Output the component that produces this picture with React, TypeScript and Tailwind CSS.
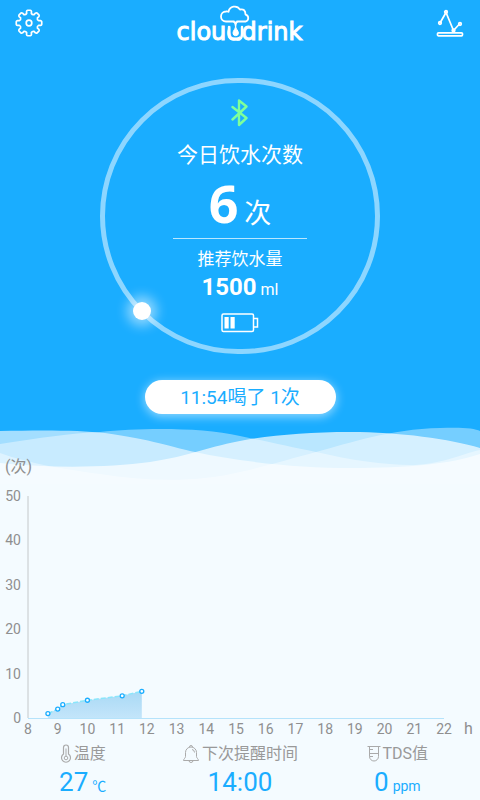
const drinks = [
  { hour: 8.67, count: 1 },
  { hour: 9, count: 2 },
  { hour: 9.17, count: 3 },
  { hour: 10, count: 4 },
  { hour: 11.17, count: 5 },
  { hour: 11.83, count: 6 },
];

const hours = [8, 9, 10, 11, 12, 13, 14, 15, 16, 17, 18, 19, 20, 21, 22];
const counts = [0, 10, 20, 30, 40, 50];

const chart = { left: 28, right: 444, top: 42, bottom: 264 };

const toX = (hour: number) =>
  chart.left + ((hour - 8) / 14) * (chart.right - chart.left);
const toY = (count: number) =>
  chart.bottom - (count / 50) * (chart.bottom - chart.top);

function gearPath() {
  const point = (radius: number, degrees: number) => {
    const a = (degrees * Math.PI) / 180;
    return `${(14 + radius * Math.cos(a)).toFixed(2)} ${(14 + radius * Math.sin(a)).toFixed(2)}`;
  };
  let d = "";
  for (let i = 0; i < 8; i++) {
    const a = i * 45;
    d += `${i === 0 ? "M" : "L"}${point(9.8, a - 14)}`;
    d += `L${point(11.8, a - 12)}Q${point(12.8, a - 10)} ${point(12.8, a - 6)}`;
    d += `L${point(12.8, a + 6)}Q${point(12.8, a + 10)} ${point(11.8, a + 12)}`;
    d += `L${point(9.8, a + 14)}Q${point(8.6, a + 22.5)} ${point(9.8, a + 31)}`;
  }
  return d + "Z";
}

function Logo() {
  return (
    <div className="relative h-10 font-['DejaVu_Sans'] text-[24px] leading-6 text-white">
      <h1 className="pt-5 [-webkit-text-stroke:1px_white]">clouddrink</h1>
      {/* Cloud with a drop falling into the first d */}
      <svg
        className="absolute left-[43px] top-[3px]"
        width="34"
        height="38"
        viewBox="0 0 34 38"
        fill="none"
        stroke="white"
        strokeWidth="1.800"
        strokeLinecap="round"
        strokeLinejoin="round"
      >
        <path d="M10 17h12v9c0 4-1 8.500-6 8.500S10.500 30 10.500 26Z" fill="#1aadff" stroke="none" />
        <path d="M9 24v6.500c0 4 2 6 5 6h4c2.500 0 4-2 4-6V24" strokeWidth="2.400" />
        <path d="M14 18.500H6A4.700 4.700 0 0 1 6 8.500Q7.500 8.300 8.500 8.800A6.300 6.300 0 0 1 20 6.500Q25.500 5.500 25.500 11.500A3.600 3.600 0 0 1 25.500 18.500H17" />
        <path d="M12 18.500h7q-2.500 1-2.700 5h-1.400q-.2-4-2.900-5Z" fill="white" stroke="none" />
        <path d="M15.600 23.500c0 2.500-2.600 4-2.600 6.500a2.700 2.700 0 0 0 5.400 0c0-2.500-2.800-4-2.800-6.500Z" fill="white" strokeWidth="1" />
      </svg>
    </div>
  );
}

function Header() {
  return (
    <header className="flex h-12 items-start justify-between px-4">
      <button type="button" aria-label="设置" className="mt-[9px] -ml-px">
        <svg width="28" height="28" viewBox="0 0 28 28" fill="none" stroke="white" strokeWidth="1.700" strokeLinejoin="round">
          <path d={gearPath()} />
          <circle cx="14" cy="14" r="2.800" />
        </svg>
      </button>
      <Logo />
      <button type="button" aria-label="统计" className="mt-2">
        <svg width="28" height="30" viewBox="0 0 28 30" fill="none" stroke="white" strokeWidth="1.700">
          <path d="M4 15 10 4.500 17.500 22.500 23.500 16" />
          <circle cx="4" cy="15" r="1.300" />
          <circle cx="10" cy="4" r="1.300" />
          <circle cx="17.500" cy="22.500" r="1.300" />
          <circle cx="24" cy="16" r="1.300" />
          <rect x="1.500" y="24.800" width="25" height="3" rx="1" />
        </svg>
      </button>
    </header>
  );
}

function Dial() {
  return (
    <div className="relative mx-auto mt-[30px] flex h-[276px] w-[280px] flex-col items-center rounded-full border-[5px] border-white/50 text-white">
      <svg
        className="mt-4 shrink-0"
        width="18"
        height="28"
        viewBox="0 0 18 28"
        fill="none"
        stroke="#7dff9c"
        strokeWidth="2.400"
        strokeLinecap="round"
        strokeLinejoin="round"
      >
        <path d="M1.500 8 15.500 19 8 26V1.500L15.500 7.500 1.500 20.500" />
      </svg>
      <p className="mt-3 text-[21px] leading-8">今日饮水次数</p>
      <p className="mt-0.5 flex h-[60px] items-baseline gap-1.5 leading-[60px]">
        <span className="font-['Open_Sans'] text-[52px] font-bold">6</span>
        <span className="text-[27px]">次</span>
      </p>
      <hr className="mt-[5px] w-[134px] border-white/70" />
      <p className="mt-2 text-[17px] leading-6">推荐饮水量</p>
      <p className="mt-0.5 flex h-7 items-baseline gap-1 leading-7">
        <span className="text-[24px] font-bold">1500</span>
        <span className="text-[16px]">ml</span>
      </p>
      <svg className="mt-3 shrink-0" width="38" height="20" viewBox="0 0 38 20" fill="none" stroke="white" strokeWidth="1.500">
        <rect x="1" y="1" width="31.500" height="17.500" rx="1.500" />
        <path d="M32.500 5.500h4v8.500h-4" />
        <path d="M3.500 4h4.200v11.500H3.500zM9.500 4h4.200v11.500H9.500z" fill="white" stroke="none" />
      </svg>
      <span className="absolute bottom-[29px] left-7 size-[18px] rounded-full bg-white shadow-[0_0_12px_6px_rgba(255,255,255,0.5)]" />
    </div>
  );
}

function Waves() {
  return (
    <svg className="mt-3 block h-[58px] w-full" viewBox="0 0 480 58" preserveAspectRatio="none" fill="white">
      <path opacity=".6" d="M0 5C40 4 80 4 105 7C150 13 175 22 195 26C240 36 300 42 350 42C410 42 450 38 480 28V58H0Z" />
      <path opacity=".4" d="M0 18C40 12 70 7 100 6C140 2 200 1 240 10C270 16 290 21 316 26C350 34 385 39 410 39C440 39 462 28 480 24V58H0Z" />
      <path opacity=".7" d="M0 37C60 43 110 41 150 36C190 30 210 20 245 14C275 9 310 6 350 6C400 6 450 13 480 22V58H0Z" />
      <path opacity=".4" d="M0 27C30 38 70 44 100 48C150 56 200 56 240 46C270 39 290 33 316 26C350 17 390 3 440 2C460 1 475 2 480 5V58H0Z" />
    </svg>
  );
}

function DrinkChart() {
  const line = drinks.map((p) => `${toX(p.hour)},${toY(p.count)}`).join(" ");
  const first = toX(drinks[0].hour);
  const last = toX(drinks[drinks.length - 1].hour);

  return (
    <svg className="block w-full" viewBox="0 0 480 286" fontSize="14" fill="#8f8f8f">
      <defs>
        <linearGradient id="area" x1="0" y1="0" x2="0" y2="1">
          <stop offset="0" stopColor="#a9d9f5" />
          <stop offset="1" stopColor="#c3e5fa" />
        </linearGradient>
      </defs>
      <text x="5" y="18" fontSize="16">(次)</text>
      {counts.map((count) => (
        <text key={count} x="21" y={toY(count) + 5} textAnchor="end">
          {count}
        </text>
      ))}
      {hours.map((hour) => (
        <text key={hour} x={toX(hour)} y="280" textAnchor="middle">
          {hour}
        </text>
      ))}
      <text x="464" y="280" fontSize="16">h</text>

      <polygon points={`${first},${chart.bottom} ${line} ${last},${chart.bottom}`} fill="url(#area)" />
      <path d={`M${chart.left} ${chart.top}V${chart.bottom}`} stroke="#c4c8ca" />
      <path d={`M${chart.left} ${chart.bottom + 0.5}H${chart.right}`} stroke="#b5e3fb" />
      <polyline points={line} fill="none" stroke="#8ae6fb" strokeWidth="1.500" strokeDasharray="5 2" />
      {drinks.map((p) => (
        <circle key={p.hour} cx={toX(p.hour)} cy={toY(p.count)} r="2" fill="white" stroke="#1aadff" strokeWidth="1.300" />
      ))}
    </svg>
  );
}

function ThermometerIcon() {
  return (
    <svg width="12" height="20" viewBox="0 0 12 20" fill="none" stroke="#aaa" strokeWidth="1.200">
      <path d="M3.500 10V3.500a2.500 2.500 0 0 1 5 0V10a4.500 4.500 0 1 1-5 0Z" />
      <path d="M6 4.500V12" strokeWidth="1" />
      <circle cx="6" cy="14" r="1.800" strokeWidth="1" />
    </svg>
  );
}

function BellIcon() {
  return (
    <svg width="18" height="20" viewBox="0 0 18 20" fill="none" stroke="#aaa" strokeLinejoin="round">
      <path d="M3.500 12.500V8.500a5.500 5.500 0 0 1 11 0V12.500c0 1.500 2 2.500 2 4h-15c0-1.500 2-2.500 2-4Z" />
      <path d="M7.500 3a1.500 1.500 0 0 1 3 0M7 16.500a2 2 0 0 0 4 0" />
      <path d="M10 5.500a3 3 0 0 1 2.500 3" />
    </svg>
  );
}

function TubeIcon() {
  return (
    <svg width="14" height="20" viewBox="0 0 14 20" fill="none" stroke="#aaa">
      <path d="M.5 2.500h13M2.500 2.500V12.500a4.500 4.500 0 0 0 9 0V2.500M2.500 9.500h9M2.500 5.500h3.500M2.500 12.500h3.500" />
    </svg>
  );
}

const stats = [
  { label: "温度", value: "27", unit: "℃", Icon: ThermometerIcon },
  { label: "下次提醒时间", value: "14:00", unit: "", Icon: BellIcon },
  { label: "TDS值", value: "0", unit: "ppm", Icon: TubeIcon },
];

export default function App() {
  return (
    <main className="min-h-screen bg-[#f4fbff] font-[Roboto,'Noto_Sans_CJK_SC',sans-serif]">
      <section className="bg-[#1aadff]">
        <Header />
        <Dial />
        <button
          type="button"
          className="mx-auto mt-[26px] block h-[34px] w-[191px] rounded-full bg-white text-[19px] leading-9 text-[#1aadff] shadow-[0_2px_10px_1px_rgba(255,255,255,0.5)]"
        >
          11:54喝了 1次
        </button>
        <Waves />
      </section>

      <section className="relative -mt-[30px]">
        <DrinkChart />
        <div className="grid grid-cols-3 px-1 pt-0.5">
          {stats.map(({ label, value, unit, Icon }) => (
            <div key={label} className="flex flex-col items-center">
              <div className="flex items-center gap-0.5 text-[16px] leading-6 text-[#999]">
                <Icon />
                <span>{label}</span>
              </div>
              <div className="flex items-baseline gap-1 leading-8 text-[#1aadff]">
                <span className="text-[26px]">{value}</span>
                {unit && <span className="text-[14px]">{unit}</span>}
              </div>
            </div>
          ))}
        </div>
      </section>
    </main>
  );
}
